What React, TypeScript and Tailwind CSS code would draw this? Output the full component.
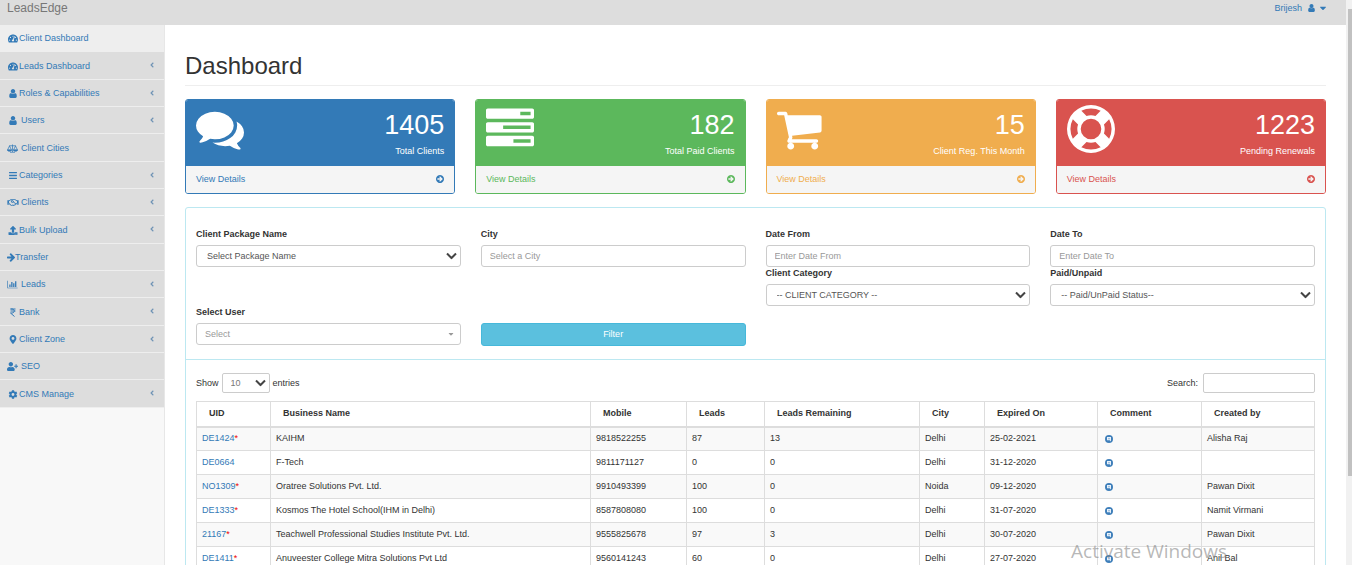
import clsx from "clsx";
import type { ComponentType } from "react";
import {
  FaAngleLeft,
  FaBars,
  FaCaretDown,
  FaCog,
  FaMapMarkerAlt,
  FaRegHandshake,
  FaTachometerAlt,
  FaUpload,
  FaUserPlus,
} from "react-icons/fa";

type IconProps = { className?: string };

// old style glyphs that the icon package does not ship anymore
const glyph = (d: string, viewBox = "0 0 1792 1792") =>
  function Glyph({ className }: IconProps) {
    return (
      <svg viewBox={viewBox} fill="currentColor" className={className} aria-hidden="true">
        <path d={d} />
      </svg>
    );
  };

const UserIcon = glyph(
  "M1536 1399q0 109-62.5 187t-150.5 78h-854q-88 0-150.5-78t-62.5-187q0-85 8.5-160.5t31.5-152 58.5-131 94-89 134.5-34.5q131 128 313 128t313-128q76 0 134.5 34.5t94 89 58.5 131 31.5 152 8.5 160.5zm-256-887q0 159-112.5 271.5t-271.5 112.5-271.5-112.5-112.5-271.5 112.5-271.5 271.5-112.5 271.5 112.5 112.5 271.5z",
  "256 128 1280 1536"
);
const ArrowRightIcon = glyph(
  "M1600 960q0 54-37 91l-651 651q-39 37-91 37-51 0-90-37l-75-75q-38-38-38-91t38-91l293-293h-704q-52 0-84.5-37.5t-32.5-90.5v-128q0-53 32.5-90.5t84.5-37.5h704l-293-294q-38-36-38-90t38-90l75-75q38-38 90-38 53 0 91 38l651 651q37 35 37 90z",
  "128 192 1472 1536"
);
const BarChartIcon = glyph(
  "M640 896v512h-256v-512h256zm384-512v1024h-256v-1024h256zm1024 1152v128h-2048v-1536h128v1408h1920zm-640-896v768h-256v-768h256zm384-384v1152h-256v-1152h256z",
  "0 0 2048 1792"
);
const CommentsIcon = glyph(
  "M1408 768q0 139-94 257t-256.5 186.5-353.5 68.5q-86 0-176-16-124 88-278 128-36 9-86 16h-3q-11 0-20.5-8t-11.5-21q-1-3-1-6.5t.5-6.5 2-6l2.5-5 3.5-5.5 4-5 4.5-5 4-4.5q5-6 23-25t26-29.5 22.5-29 25-38.5 20.5-44q-124-72-195-177t-71-224q0-139 94-257t256.5-186.5 353.5-68.5 353.5 68.5 256.5 186.5 94 257zm384 256q0 120-71 224.5t-195 176.5q10 24 20.5 44t25 38.5 22.5 29 26 29.5 23 25q1 1 4 4.5t4.5 5 4 5 3.5 5.5l2.5 5 2 6 .5 6.5-1 6.5q-3 14-13 22t-22 7q-50-7-86-16-154-40-278-128-90 16-176 16-271 0-472-132 58 4 88 4 161 0 309-45t264-129q125-92 192-212t67-254q0-77-23-152 129 71 204 178t75 230z"
);
const TasksIcon = glyph(
  "M1024 1408h640v-128h-640v128zm-384-512h1024v-128h-1024v128zm640-512h384v-128h-384v128zm512 832v256q0 26-19 45t-45 19h-1664q-26 0-45-19t-19-45v-256q0-26 19-45t45-19h1664q26 0 45 19t19 45zm0-512v256q0 26-19 45t-45 19h-1664q-26 0-45-19t-19-45v-256q0-26 19-45t45-19h1664q26 0 45 19t19 45zm0-512v256q0 26-19 45t-45 19h-1664q-26 0-45-19t-19-45v-256q0-26 19-45t45-19h1664q26 0 45 19t19 45z"
);
const CartIcon = glyph(
  "M704 1536q0 52-38 90t-90 38-90-38-38-90 38-90 90-38 90 38 38 90zm896 0q0 52-38 90t-90 38-90-38-38-90 38-90 90-38 90 38 38 90zm128-1088v512q0 24-16.5 42.5t-40.5 21.5l-1044 122q13 60 13 70 0 16-24 64h920q26 0 45 19t19 45-19 45-45 19h-1024q-26 0-45-19t-19-45q0-11 8-31.5t16-36 21.5-40 15.5-29.5l-177-823h-204q-26 0-45-19t-19-45 19-45 45-19h256q16 0 28.500 6.500t19.500 15.500 13 24.500 8 26 5.500 29.500 4.500 26h1201q26 0 45 19t19 45z",
  "64 0 1792 1792"
);
const LifeRingIcon = glyph(
  "M896 0q182 0 348 71t286 191 191 286 71 348-71 348-191 286-286 191-348 71-348-71-286-191-191-286-71-348 71-348 191-286 286-191 348-71zm0 128q-190 0-361 90l194 194q82-28 167-28t167 28l194-194q-171-90-361-90zm-678 1129l194-194q-28-82-28-167t28-167l-194-194q-90 171-90 361t90 361zm678 407q190 0 361-90l-194-194q-82 28-167 28t-167-28l-194 194q171 90 361 90zm0-384q159 0 271.5-112.5t112.5-271.5-112.5-271.5-271.5-112.5-271.5 112.5-112.5 271.5 112.5 271.5 271.5 112.5zm484-217l194 194q90-171 90-361t-90-361l-194 194q28 82 28 167t-28 167z"
);
const CircleArrowIcon = glyph(
  "M1413 896q0-27-18-45l-91-91-362-362q-18-18-45-18t-45 18l-91 91q-18 18-18 45t18 45l189 189h-502q-26 0-45 19t-19 45v128q0 26 19 45t45 19h502l-189 189q-18 18-18 45t18 45l91 91q18 18 45 18t45-18l362-362 91-91q18-18 18-45zm251 0q0 209-103 385.5t-279.5 279.5-385.5 103-385.5-103-279.5-279.5-103-385.5 103-385.5 279.5-279.5 385.5-103 385.5 103 279.5 279.5 103 385.5z",
  "128 128 1536 1536"
);

const ScaleIcon = ({ className }: IconProps) => (
  <svg viewBox="0 0 22 18" fill="none" stroke="currentColor" strokeWidth="1.5" className={className} aria-hidden="true">
    <path d="M11 1v15M6 16.500h10M4 3.500h14M5 4l-4 8h8zM17 4l-4 8h8z" />
    <path d="M1 12a4 2.500 0 0 0 8 0zM13 12a4 2.500 0 0 0 8 0z" fill="currentColor" />
  </svg>
);

const RupeeIcon = ({ className }: IconProps) => (
  <svg viewBox="-3 0 18 18" fill="none" stroke="currentColor" strokeWidth="2" className={className} aria-hidden="true">
    <path d="M1 2h10M1 6h10M1 2h3c6 0 6 8 0 8h-3l8 7" />
  </svg>
);

type MenuItem = {
  label: string;
  icon: ComponentType<IconProps>;
  size?: string;
  sub?: boolean;
  active?: boolean;
};

const menu: MenuItem[] = [
  { label: "Client Dashboard", icon: FaTachometerAlt, active: true },
  { label: "Leads Dashboard", icon: FaTachometerAlt, sub: true },
  { label: "Roles & Capabilities", icon: UserIcon, sub: true },
  { label: "Users", icon: UserIcon, size: "ml-px mr-[3px] w-[10px]", sub: true },
  { label: "Client Cities", icon: ScaleIcon, size: "mr-[3px] w-[11px]" },
  { label: "Categories", icon: FaBars, sub: true },
  { label: "Clients", icon: FaRegHandshake, size: "mr-[2px] w-[12px]", sub: true },
  { label: "Bulk Upload", icon: FaUpload, sub: true },
  { label: "Transfer", icon: ArrowRightIcon, size: "w-[8px]" },
  { label: "Leads", icon: BarChartIcon, size: "mr-[3px] w-[11px]", sub: true },
  { label: "Bank", icon: RupeeIcon, sub: true },
  { label: "Client Zone", icon: FaMapMarkerAlt, sub: true },
  { label: "SEO", icon: FaUserPlus, size: "mr-[3px] w-[11px]" },
  { label: "CMS Manage", icon: FaCog, sub: true },
];

const cards = [
  {
    value: "1405",
    label: "Total Clients",
    icon: CommentsIcon,
    border: "border-[#337ab7]",
    bg: "bg-[#337ab7]",
    text: "text-[#337ab7]",
  },
  {
    value: "182",
    label: "Total Paid Clients",
    icon: TasksIcon,
    border: "border-[#5cb85c]",
    bg: "bg-[#5cb85c]",
    text: "text-[#5cb85c]",
  },
  {
    value: "15",
    label: "Client Reg. This Month",
    icon: CartIcon,
    border: "border-[#f0ad4e]",
    bg: "bg-[#f0ad4e]",
    text: "text-[#f0ad4e]",
  },
  {
    value: "1223",
    label: "Pending Renewals",
    icon: LifeRingIcon,
    border: "border-[#d9534f]",
    bg: "bg-[#d9534f]",
    text: "text-[#d9534f]",
  },
];

const columns = [
  { name: "UID", width: "w-[74px]" },
  { name: "Business Name", width: "" },
  { name: "Mobile", width: "w-[96px]" },
  { name: "Leads", width: "w-[78px]" },
  { name: "Leads Remaining", width: "w-[155px]" },
  { name: "City", width: "w-[65px]" },
  { name: "Expired On", width: "w-[113px]" },
  { name: "Comment", width: "w-[104px]" },
  { name: "Created by", width: "w-[113px]" },
];

const rows = [
  { uid: "DE1424", star: true, name: "KAIHM", mobile: "9818522255", leads: 87, left: 13, city: "Delhi", expired: "25-02-2021", by: "Alisha Raj" },
  { uid: "DE0664", star: false, name: "F-Tech", mobile: "9811171127", leads: 0, left: 0, city: "Delhi", expired: "31-12-2020", by: "" },
  { uid: "NO1309", star: true, name: "Oratree Solutions Pvt. Ltd.", mobile: "9910493399", leads: 100, left: 0, city: "Noida", expired: "09-12-2020", by: "Pawan Dixit" },
  { uid: "DE1333", star: true, name: "Kosmos The Hotel School(IHM in Delhi)", mobile: "8587808080", leads: 100, left: 0, city: "Delhi", expired: "31-07-2020", by: "Namit Virmani" },
  { uid: "21167", star: true, name: "Teachwell Professional Studies Institute Pvt. Ltd.", mobile: "9555825678", leads: 97, left: 3, city: "Delhi", expired: "30-07-2020", by: "Pawan Dixit" },
  { uid: "DE1411", star: true, name: "Anuveester College Mitra Solutions Pvt Ltd", mobile: "9560141243", leads: 60, left: 0, city: "Delhi", expired: "27-07-2020", by: "Anil Bal" },
];

const control =
  "block h-[22px] w-full rounded-[3px] border border-[#ccc] bg-white text-[9px] placeholder:text-[#999]";

// small round comment badge used in the table
const CommentBadge = () => (
  <svg viewBox="0 0 16 16" className="size-[8px]" aria-hidden="true">
    <circle cx="8" cy="8" r="8" fill="#3f7fba" />
    <path d="M4 4h8v9l-2.500-2.500h-5.500z" fill="#e8f1fa" />
    <path d="M6 6.500h4v2h-4z" fill="#8db4d8" />
  </svg>
);

const Chevron = () => (
  <svg
    viewBox="0 0 11 7"
    fill="none"
    stroke="#444"
    strokeWidth="2"
    className="pointer-events-none absolute top-1/2 right-1 w-[11px] -translate-y-1/2"
    aria-hidden="true"
  >
    <path d="M1 1l4.500 4.500 4.500-4.500" />
  </svg>
);

function SelectField({ id, label, option }: { id: string; label: string; option: string }) {
  return (
    <div>
      <label htmlFor={id} className="mb-1 block h-[13px] font-bold">
        {label}
      </label>
      <div className="relative">
        <select id={id} className={clsx(control, "appearance-none px-[10px] text-[#555]")}>
          <option>{option}</option>
        </select>
        <Chevron />
      </div>
    </div>
  );
}

function TextField({ id, label, placeholder }: { id: string; label: string; placeholder: string }) {
  return (
    <div>
      <label htmlFor={id} className="mb-1 block h-[13px] font-bold">
        {label}
      </label>
      <input id={id} type="text" placeholder={placeholder} className={clsx(control, "px-2 text-[#555]")} />
    </div>
  );
}

function Sidebar() {
  return (
    <nav className="w-[165px] shrink-0 border-r border-[#e7e7e7] bg-[#f8f8f8]">
      <ul>
        {menu.map(({ label, icon: Icon, size, sub, active }, i) => (
          <li
            key={label}
            className={clsx(
              "border-b border-[#eee]",
              i % 3 == 1 ? "h-[28px]" : "h-[27px]",
              active ? "bg-[#eee]" : "bg-[#ddd]"
            )}
          >
            <a href="#" className="flex h-full items-center pt-px pr-[10px] pl-[7px] text-[#337ab7]">
              <Icon className={clsx("h-[9px] shrink-0", size ?? "mr-px ml-px w-[10px]")} />
              <span className="flex-1">{label}</span>
              {sub && <FaAngleLeft className="mb-[2px] h-[8px] w-[4px] text-[#6f93b5]" />}
            </a>
          </li>
        ))}
      </ul>
    </nav>
  );
}

function StatCard({ value, label, icon: Icon, border, bg, text }: (typeof cards)[number]) {
  return (
    <div className={clsx("overflow-hidden rounded-[3px] border", border)}>
      <div className={clsx("flex h-[66px] justify-between px-[10px] text-white", bg)}>
        <Icon className="mt-[5px] size-[48px]" />
        <div className="pt-[9px] text-right">
          <div className="text-[27px] leading-[33px]">{value}</div>
          <div className="leading-[18px]">{label}</div>
        </div>
      </div>
      <a
        href="#"
        className={clsx("flex h-[27px] items-center justify-between bg-[#f5f5f5] px-[10px]", text)}
      >
        <span>View Details</span>
        <CircleArrowIcon className="mb-px size-[8px]" />
      </a>
    </div>
  );
}

function Filters() {
  return (
    <form className="grid grid-cols-4 gap-x-5 border-b border-[#bce8f1] px-[10px] pt-[20px] pb-[13px]">
      <SelectField id="package" label="Client Package Name" option="Select Package Name" />
      <TextField id="city" label="City" placeholder="Select a City" />
      <TextField id="from" label="Date From" placeholder="Enter Date From" />
      <TextField id="to" label="Date To" placeholder="Enter Date To" />
      <div className="col-start-3">
        <SelectField id="category" label="Client Category" option="-- CLIENT CATEGORY --" />
      </div>
      <SelectField id="paid" label="Paid/Unpaid" option="-- Paid/UnPaid Status--" />
      <div className="col-start-1">
        <label htmlFor="user" className="mb-1 block h-[13px] font-bold">
          Select User
        </label>
        <div className="relative">
          <select id="user" className={clsx(control, "appearance-none px-2 text-[#999]")}>
            <option>Select</option>
          </select>
          <FaCaretDown className="pointer-events-none absolute top-[7px] right-[6px] size-[8px] text-[#999]" />
        </div>
      </div>
      <button
        type="button"
        className="mt-[17px] h-[23px] rounded-[3px] border border-[#46b8da] bg-[#5bc0de] text-white"
      >
        Filter
      </button>
    </form>
  );
}

function ClientsTable() {
  return (
    <table className="mt-2 w-full table-fixed border-collapse border border-[#ddd]">
      <thead>
        <tr className="h-[25px] border-b-2 border-[#ddd]">
          {columns.map((c) => (
            <th key={c.name} className={clsx("border-x border-[#ddd] px-3 text-left font-bold", c.width)}>
              {c.name}
            </th>
          ))}
        </tr>
      </thead>
      <tbody>
        {rows.map((r) => (
          <tr
            key={r.uid}
            className="h-[24px] odd:bg-[#f9f9f9] [&>td]:border [&>td]:border-[#ddd] [&>td]:px-[5px]"
          >
            <td>
              <a href="#" className="text-[#337ab7]">
                {r.uid}
              </a>
              {r.star && <span className="text-[#e00]">*</span>}
            </td>
            <td>{r.name}</td>
            <td>{r.mobile}</td>
            <td>{r.leads}</td>
            <td>{r.left}</td>
            <td>{r.city}</td>
            <td>{r.expired}</td>
            <td>
              <a href="#" aria-label="Comment" className="inline-block pl-[2px] align-middle">
                <CommentBadge />
              </a>
            </td>
            <td>{r.by}</td>
          </tr>
        ))}
      </tbody>
    </table>
  );
}

export default function App() {
  return (
    <div className="relative flex h-screen overflow-hidden bg-white font-['Liberation_Sans',Arial,sans-serif] text-[9px] leading-[13px] text-[#333]">
      <div className="flex min-w-0 flex-1 flex-col">
        <header className="flex h-[25px] shrink-0 justify-between bg-[#ddd] pr-[18px] pl-[7px]">
          <a href="#" className="text-[12px] leading-[16px] text-[#777]">
            LeadsEdge
          </a>
          <button type="button" className="flex h-[16px] items-center text-[#337ab7]">
            Brijesh
            <UserIcon className="mr-[3px] ml-[6px] h-[8px] w-[7px]" />
            <FaCaretDown className="size-[10px]" />
          </button>
        </header>
        <div className="flex min-h-0 flex-1">
          <Sidebar />
          <main className="min-w-0 flex-1 px-5 pt-[27px]">
            <h1 className="border-b border-[#eee] pb-[5px] text-[24px] leading-[28px]">Dashboard</h1>
            <div className="mt-[13px] grid grid-cols-4 gap-5">
              {cards.map((c) => (
                <StatCard key={c.label} {...c} />
              ))}
            </div>
            <section className="mt-[13px] rounded-t-[3px] border border-[#bce8f1]">
              <Filters />
              <div className="px-[10px] pt-[13px]">
                <div className="flex justify-between">
                  <label className="flex items-center gap-[3px]">
                    Show
                    <span className="relative">
                      <select className="block h-[20px] w-[48px] appearance-none rounded-[2px] border border-[#ccc] bg-white px-2 text-[9px] text-[#777]">
                        <option>10</option>
                      </select>
                      <Chevron />
                    </span>
                    entries
                  </label>
                  <label className="flex items-center gap-[5px]">
                    Search:
                    <input type="search" className="h-[20px] w-[112px] rounded-[2px] border border-[#ccc] px-2" />
                  </label>
                </div>
                <ClientsTable />
              </div>
            </section>
          </main>
        </div>
      </div>
      <div className="w-[6px] shrink-0 bg-[#f1f1f1] pt-[9px] pl-[2px]">
        <div className="h-[467px] bg-[#c1c1c1]" />
      </div>
      <div className="pointer-events-none absolute right-[125px] bottom-[2px] font-['Open_Sans',sans-serif] text-[19px] leading-[24px] text-[#888]/60">
        Activate Windows
      </div>
    </div>
  );
}
